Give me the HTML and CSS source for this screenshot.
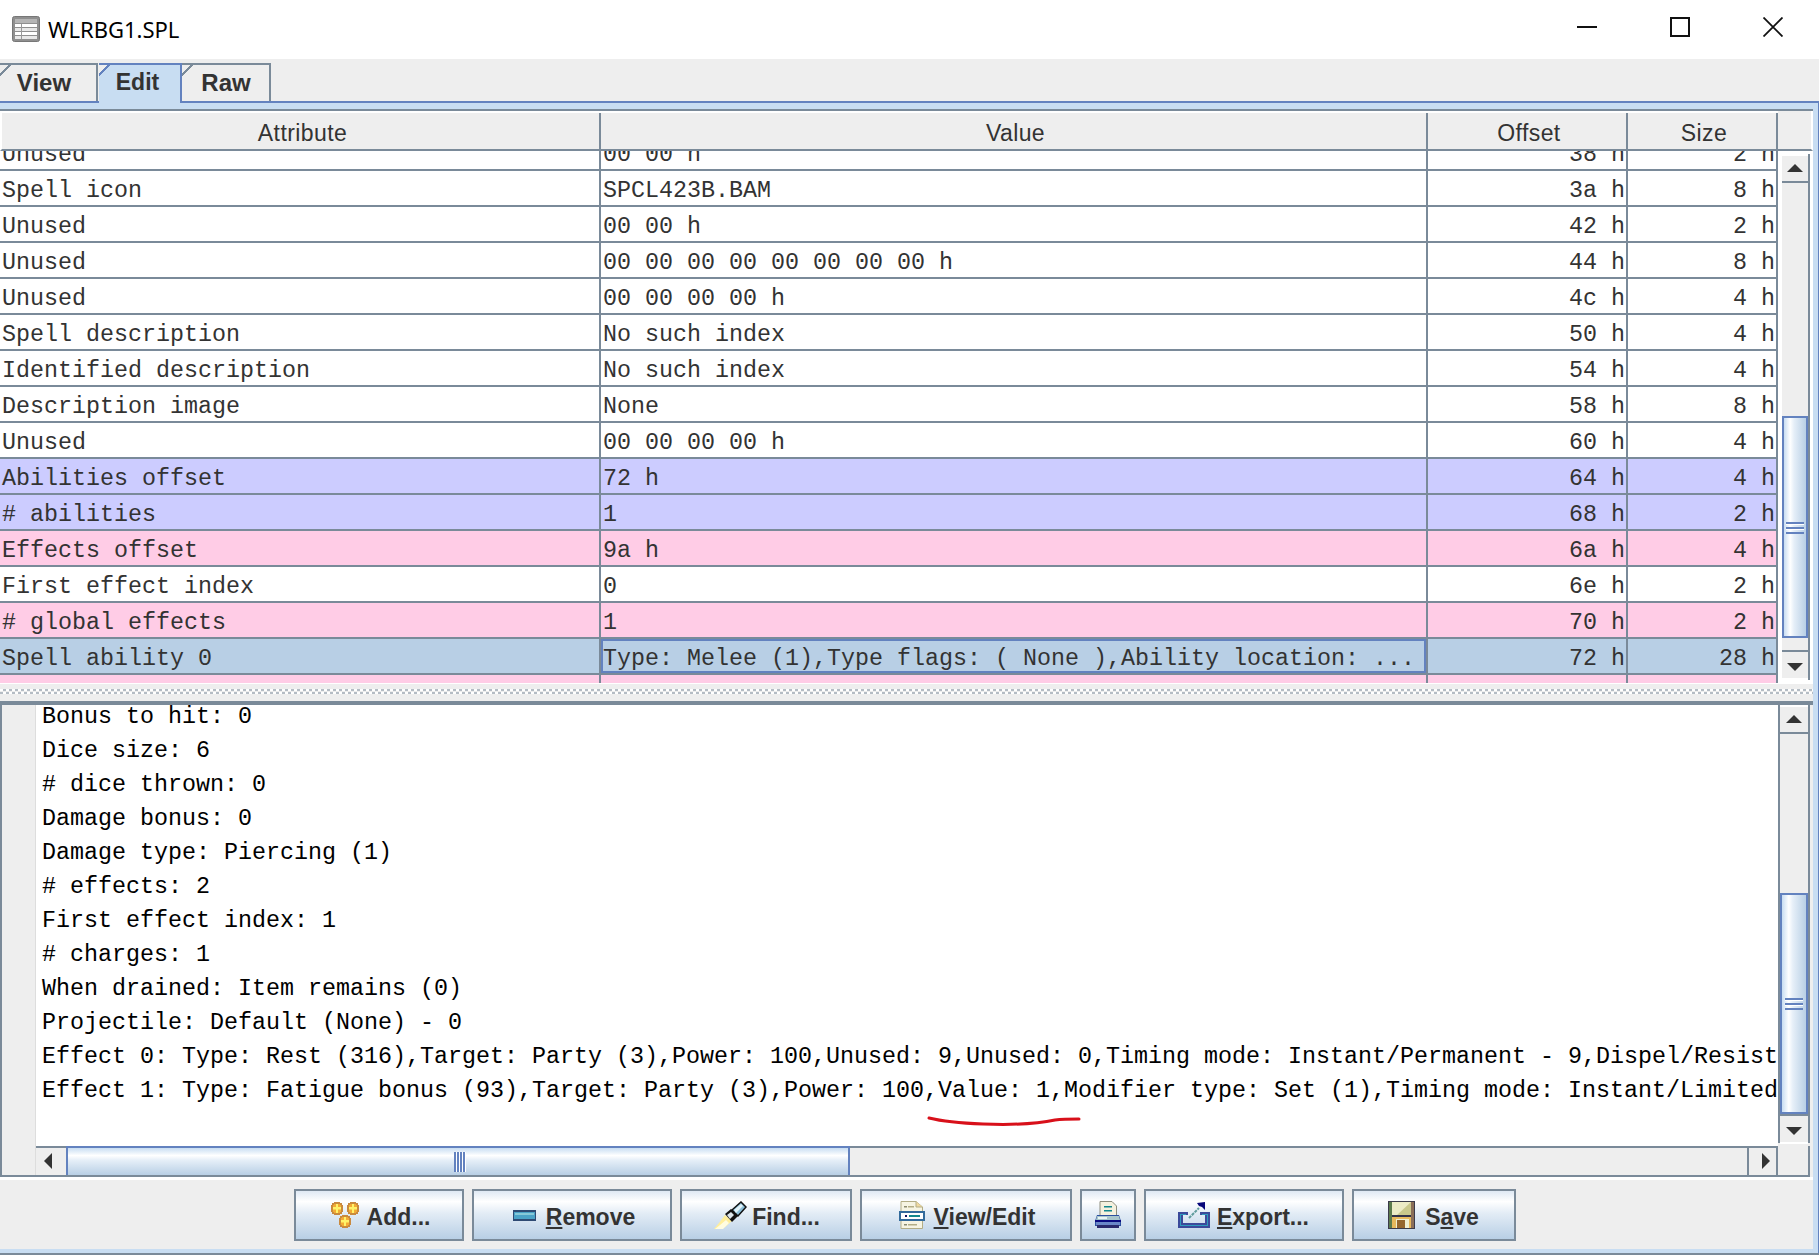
FILE: index.html
```html
<!DOCTYPE html>
<html lang="en">
<head>
  <meta charset="UTF-8">
  <title>WLRBG1.SPL</title>
  <link rel="stylesheet" href="styles.css">
</head>
<body>
<div class="window">

  <div class="titlebar">
    <svg class="app-icon" width="28" height="26" viewBox="0 0 28 26">
      <rect x="0.5" y="0.5" width="27" height="25" rx="2" fill="#8f8f8f" stroke="#777"/>
      <rect x="3" y="3" width="22" height="4" fill="#b5b5b5"/>
      <rect x="3" y="8" width="22" height="3" fill="#fff"/>
      <rect x="3" y="12" width="22" height="3" fill="#e8e8e8"/>
      <rect x="3" y="16" width="22" height="3" fill="#fff"/>
      <rect x="3" y="20" width="22" height="3" fill="#e8e8e8"/>
      <rect x="9" y="8" width="1" height="15" fill="#999"/>
    </svg>
    <span class="title-text">WLRBG1.SPL</span>
    <div class="win-controls">
      <svg class="win-btn" width="20" height="20" viewBox="0 0 20 20"><rect x="0" y="9" width="20" height="2" fill="#111"/></svg>
      <svg class="win-btn" width="20" height="20" viewBox="0 0 20 20"><rect x="1" y="1" width="18" height="18" fill="none" stroke="#111" stroke-width="2"/></svg>
      <svg class="win-btn" width="20" height="20" viewBox="0 0 20 20"><path d="M0.5 0.5L19.5 19.5M19.5 0.5L0.5 19.5" stroke="#111" stroke-width="1.8"/></svg>
    </div>
  </div>

  <div class="tabstrip">
    <div class="tab tab-view">View</div>
    <div class="tab tab-edit">Edit</div>
    <div class="tab tab-raw">Raw</div>
  </div>

  <div class="panel">
    <div class="panel-inner">

      <div class="table-pane">
        <div class="table-main">
          <div class="row header-row">
            <div class="cell">Attribute</div>
            <div class="cell">Value</div>
            <div class="cell">Offset</div>
            <div class="cell">Size</div>
          </div>
          <div class="table-viewport">
            <div class="rows">
              <div class="row"><div class="cell">Unused</div><div class="cell">00 00 h</div><div class="cell num">38 h</div><div class="cell num">2 h</div></div>
              <div class="row"><div class="cell">Spell icon</div><div class="cell">SPCL423B.BAM</div><div class="cell num">3a h</div><div class="cell num">8 h</div></div>
              <div class="row"><div class="cell">Unused</div><div class="cell">00 00 h</div><div class="cell num">42 h</div><div class="cell num">2 h</div></div>
              <div class="row"><div class="cell">Unused</div><div class="cell">00 00 00 00 00 00 00 00 h</div><div class="cell num">44 h</div><div class="cell num">8 h</div></div>
              <div class="row"><div class="cell">Unused</div><div class="cell">00 00 00 00 h</div><div class="cell num">4c h</div><div class="cell num">4 h</div></div>
              <div class="row"><div class="cell">Spell description</div><div class="cell">No such index</div><div class="cell num">50 h</div><div class="cell num">4 h</div></div>
              <div class="row"><div class="cell">Identified description</div><div class="cell">No such index</div><div class="cell num">54 h</div><div class="cell num">4 h</div></div>
              <div class="row"><div class="cell">Description image</div><div class="cell">None</div><div class="cell num">58 h</div><div class="cell num">8 h</div></div>
              <div class="row"><div class="cell">Unused</div><div class="cell">00 00 00 00 h</div><div class="cell num">60 h</div><div class="cell num">4 h</div></div>
              <div class="row row-ability"><div class="cell">Abilities offset</div><div class="cell">72 h</div><div class="cell num">64 h</div><div class="cell num">4 h</div></div>
              <div class="row row-ability"><div class="cell"># abilities</div><div class="cell">1</div><div class="cell num">68 h</div><div class="cell num">2 h</div></div>
              <div class="row row-effect"><div class="cell">Effects offset</div><div class="cell">9a h</div><div class="cell num">6a h</div><div class="cell num">4 h</div></div>
              <div class="row"><div class="cell">First effect index</div><div class="cell">0</div><div class="cell num">6e h</div><div class="cell num">2 h</div></div>
              <div class="row row-effect"><div class="cell"># global effects</div><div class="cell">1</div><div class="cell num">70 h</div><div class="cell num">2 h</div></div>
              <div class="row row-selected"><div class="cell">Spell ability 0</div><div class="cell cell-focus">Type: Melee (1),Type flags: ( None ),Ability location: ...</div><div class="cell num">72 h</div><div class="cell num">28 h</div></div>
              <div class="row row-effect"><div class="cell"></div><div class="cell"></div><div class="cell num"></div><div class="cell num"></div></div>
            </div>
          </div>
        </div>
        <div class="table-side">
          <div class="header-corner"></div>
          <div class="vscroll vscroll-table">
            <div class="sb-btn sb-up"></div>
            <div class="sb-track track-top-table"></div>
            <div class="sb-thumb thumb-table"><span class="grip"></span></div>
            <div class="sb-track track-bottom-table"></div>
            <div class="sb-btn sb-down"></div>
          </div>
        </div>
      </div>

      <div class="divider"></div>

      <div class="text-pane">
        <div class="gutter"></div>
        <div class="text-area">
          <div class="text-lines">
            <div class="line">Bonus to hit: 0</div>
            <div class="line">Dice size: 6</div>
            <div class="line"># dice thrown: 0</div>
            <div class="line">Damage bonus: 0</div>
            <div class="line">Damage type: Piercing (1)</div>
            <div class="line"># effects: 2</div>
            <div class="line">First effect index: 1</div>
            <div class="line"># charges: 1</div>
            <div class="line">When drained: Item remains (0)</div>
            <div class="line">Projectile: Default (None) - 0</div>
            <div class="line">Effect 0: Type: Rest (316),Target: Party (3),Power: 100,Unused: 9,Unused: 0,Timing mode: Instant/Permanent - 9,Dispel/Resist</div>
            <div class="line">Effect 1: Type: Fatigue bonus (93),Target: Party (3),Power: 100,Value: 1,Modifier type: Set (1),Timing mode: Instant/Limited</div>
          </div>
          <!-- red pen mark from the screenshot -->
          <svg class="pen-mark" width="154" height="12" viewBox="0 0 154 12">
            <path d="M2 2C14 5 30 7 56 8C84 9 110 8 128 4C136 3 144 3 152 3" fill="none" stroke="#d8101a" stroke-width="3" stroke-linecap="round"/>
          </svg>
        </div>
        <div class="vscroll vscroll-text">
          <div class="sb-btn sb-up"></div>
          <div class="sb-track track-top-text"></div>
          <div class="sb-thumb thumb-text"><span class="grip"></span></div>
          <div class="sb-btn sb-down"></div>
        </div>
        <div class="hscroll">
          <div class="sb-btn sb-left"></div>
          <div class="hthumb"><span class="hgrip"></span></div>
          <div class="htrack"></div>
          <div class="sb-btn sb-right"></div>
        </div>
        <div class="scroll-corner"></div>
      </div>

      <div class="button-bar">
        <button class="btn btn-add">
          <svg width="30" height="26" viewBox="0 0 30 26">
            <defs>
              <g id="plus-blob">
                <path d="M4 0h6v1h2v2h1v7h-1v2h-2v1H4v-1H2v-2H1V3h1V1h2z" fill="#c98a3e"/>
                <path d="M4 2h6v1h1v7h-1v1H4v-1H3V3h1z" fill="#f3ab35"/>
                <path d="M6 2h2v3h3v2.5H8V11H6V7.5H3V5h3z" fill="#fff36a"/>
              </g>
            </defs>
            <use href="#plus-blob" x="0" y="0"/>
            <use href="#plus-blob" x="16" y="0"/>
            <use href="#plus-blob" x="8" y="13"/>
          </svg>
          <span>Add...</span>
        </button>
        <button class="btn btn-remove">
          <svg width="23" height="11" viewBox="0 0 23 11">
            <rect width="23" height="11" fill="#2e4a73"/>
            <rect x="1" y="2" width="21" height="7" fill="#4ba3c7"/>
            <rect x="2" y="3" width="19" height="2" fill="#86c9d8"/>
          </svg>
          <span><u>R</u>emove</span>
        </button>
        <button class="btn btn-find">
          <svg width="33" height="28" viewBox="0 0 33 28">
            <path d="M0 28L5 22L11 14L18 20L11 26L6 28z" fill="#ffee9a"/>
            <path d="M1 28L6 24L12 19L15 22L9 28z" fill="#fffce0"/>
            <path d="M11 13L17 8L24 15L18 21z" fill="#111"/>
            <path d="M13 14L17 11L20 14L16 18z" fill="#dde6ec"/>
            <path d="M18 9L27 1L32 6L24 15z" fill="#8cc0da" stroke="#111" stroke-width="1.5"/>
            <path d="M20 9L27 3L29 5L22 12z" fill="#e3f3f9"/>
          </svg>
          <span>Find...</span>
        </button>
        <button class="btn btn-viewedit">
          <svg width="26" height="28" viewBox="0 0 26 28">
            <path d="M2 0.5H17L23.5 6V27.5H2z" fill="#f6f4e2" stroke="#b3ad85"/>
            <path d="M17 0.5V6H23.5" fill="#f0d9a0" stroke="#b3ad85"/>
            <rect x="5" y="5" width="3" height="1.5" fill="#8b8b70"/>
            <rect x="9" y="5" width="6" height="1.5" fill="#b3ad85"/>
            <rect x="5" y="23" width="3" height="1.5" fill="#8b8b70"/>
            <rect x="9" y="23" width="9" height="1.5" fill="#b3ad85"/>
            <rect x="1" y="11" width="24" height="8" fill="#fff" stroke="#336b9c" stroke-width="2"/>
            <rect x="6" y="14" width="2" height="2" fill="#12125e"/>
            <rect x="10" y="14" width="11" height="2" fill="#12888c"/>
          </svg>
          <span><u>V</u>iew/Edit</span>
        </button>
        <button class="btn btn-print">
          <svg width="28" height="28" viewBox="0 0 28 28">
            <path d="M6 0.5H18L22.5 5V15H6z" fill="#f4f1de" stroke="#8c8c7c"/>
            <rect x="10" y="5" width="8" height="1.5" fill="#12888c"/>
            <rect x="10" y="9" width="8" height="1.5" fill="#12888c"/>
            <path d="M3 14H25L27 20V25H1V20z" fill="#2b4fa0"/>
            <path d="M3 15H25L26 19H2z" fill="#a8c6cc"/>
            <rect x="4" y="16" width="9" height="2" fill="#e8f4f4"/>
            <rect x="1" y="19" width="26" height="2" fill="#0a0a80"/>
            <rect x="2" y="21" width="24" height="3" fill="#6a88c8"/>
            <rect x="3" y="24" width="22" height="3" fill="#2a2a6c"/>
          </svg>
        </button>
        <button class="btn btn-export">
          <svg width="32" height="26" viewBox="0 0 32 26">
            <path d="M0 10H10V13H5V21H27V13H22V10H32V26H0z" fill="#3b4a9a"/>
            <path d="M2 12H8V13H3V23H29V13H24V12H30V24H2z" fill="#2e9bbd"/>
            <path d="M11 16L21 6" stroke="#5f9c9c" stroke-width="2" stroke-dasharray="3 1"/>
            <path d="M19 1L27 0V8L24 5L21 4z" fill="#06067a"/>
          </svg>
          <span><u>E</u>xport...</span>
        </button>
        <button class="btn btn-save">
          <svg width="27" height="28" viewBox="0 0 27 28">
            <rect width="27" height="28" fill="#3b3b4a"/>
            <rect x="1" y="1" width="3" height="26" fill="#5c7a4c"/>
            <rect x="4" y="1" width="19" height="13" fill="#ecebc6"/>
            <path d="M23 1V14H9z" fill="#c9c88c"/>
            <rect x="23" y="1" width="3" height="26" fill="#8a6e58"/>
            <rect x="4" y="14" width="19" height="2" fill="#33334a"/>
            <rect x="4" y="16" width="19" height="11" fill="#e8b95c"/>
            <rect x="8" y="18" width="13" height="9" fill="#f0eed0"/>
            <rect x="9" y="19" width="8" height="8" fill="#96672e"/>
          </svg>
          <span>S<u>a</u>ve</span>
        </button>
      </div>

    </div>
  </div>
  <div class="bottom-edge"></div>

</div>
</body>
</html>
```

FILE: styles.css
```css
html, body {
  margin: 0;
  padding: 0;
  background-color: #ffffff;
  overflow: hidden;
}

.window {
  width: 1819px;
  height: 1257px;
  display: flex;
  flex-direction: column;
  font-family: "Liberation Sans", Arial, sans-serif;
  color: #333333;
}

/* title bar */

.titlebar {
  height: 59px;
  flex: none;
  display: flex;
  align-items: center;
  background-color: #ffffff;
  padding-left: 12px;
  box-sizing: border-box;
}

.app-icon {
  margin-top: -1px;
}

.title-text {
  margin-left: 8px;
  font-family: "Noto Sans", sans-serif;
  font-size: 22px;
  color: #000000;
  margin-top: -2px;
}

.win-controls {
  margin-left: auto;
  display: flex;
  gap: 73px;
  padding-right: 36px;
  margin-top: -6px;
}

/* tabs */

.tabstrip {
  height: 44px;
  flex: none;
  display: flex;
  align-items: flex-end;
  background-color: #eeeeee;
  border-bottom: 2px solid #6382bf;
  box-sizing: border-box;
  position: relative;
}

.tab {
  height: 38px;
  box-sizing: border-box;
  border-top: 2px solid #7a8a99;
  border-right: 2px solid #7a8a99;
  background-image: linear-gradient(135deg, #eeeeee 6px, #7a8a99 6px, #7a8a99 8px, #eeeeee 8px);
  font-weight: bold;
  font-size: 24px;
  line-height: 35px;
  text-align: center;
  color: #333333;
}

.tab-view {
  width: 98px;
  margin-right: 1px;
  padding-right: 8px;
}

.tab-edit {
  width: 83px;
  height: 40px;
  margin-bottom: -2px;
  border-color: #6382bf;
  background-image: linear-gradient(135deg, #eeeeee 6px, #6382bf 6px, #6382bf 8px, #c8ddf2 8px);
  padding-right: 4px;
  font-size: 23px;
  z-index: 1;
}

.tab-raw {
  width: 89px;
  padding-left: 1px;
}

/* tab body */

.panel {
  flex: 1;
  min-height: 0;
  background-color: #c8ddf2;
  padding: 6px 1px 4px 0;
  border-right: 1px solid #6382bf;
  box-sizing: border-box;
  display: flex;
  flex-direction: column;
}

.panel-inner {
  flex: 1;
  min-height: 0;
  margin-right: 4px;
  background-color: #eeeeee;
  display: flex;
  flex-direction: column;
}

.bottom-edge {
  height: 4px;
  flex: none;
  border-top: 2px solid #7a8a99;
  box-sizing: border-box;
  background-color: #ffffff;
}

/* attribute table */

.table-pane {
  height: 575px;
  flex: none;
  display: flex;
  border-top: 2px solid #7a8a99;
  box-sizing: border-box;
  border-bottom: 1px solid #ffffff;
  background-color: #ffffff;
}

.table-main {
  width: 1778px;
  flex: none;
  display: flex;
  flex-direction: column;
}

.row {
  display: grid;
  grid-template-columns: 601px 827px 200px 150px;
  height: 36px;
  box-sizing: border-box;
  border-bottom: 2px solid #7a8a99;
  background-color: #ffffff;
  font-family: "Liberation Mono", "Courier New", monospace;
  font-size: 23.33px;
  line-height: 40px;
  color: #333333;
}

.cell {
  border-right: 2px solid #7a8a99;
  padding-left: 2px;
  white-space: nowrap;
  overflow: hidden;
}

.cell.num {
  text-align: right;
  padding-right: 1px;
}

.header-row {
  height: 40px;
  flex: none;
  background-color: #eeeeee;
  font-family: "Liberation Sans", Arial, sans-serif;
  font-size: 23px;
  letter-spacing: 0.4px;
  line-height: 40px;
  border-top: 2px solid #ffffff;
  border-left: 2px solid #ffffff;
  grid-template-columns: 599px 827px 200px 150px;
}

.header-row .cell {
  text-align: center;
  padding-left: 4px;
}

.table-viewport {
  flex: 1;
  min-height: 0;
  overflow: hidden;
}

.rows {
  margin-top: -16px;
}

.row-ability {
  background-color: #ccccff;
}

.row-effect {
  background-color: #ffcce6;
}

.row-selected {
  background-color: #b8cfe5;
}

.cell-focus {
  box-shadow: inset 0 0 0 2px #6382bf;
}

.table-side {
  flex: 1;
  display: flex;
  flex-direction: column;
  background-color: #ffffff;
}

.header-corner {
  height: 40px;
  flex: none;
  background-color: #eeeeee;
  border-bottom: 2px solid #7a8a99;
  border-right: 2px solid #ffffff;
  box-sizing: border-box;
}

/* scrollbars */

.vscroll {
  display: flex;
  flex-direction: column;
  box-sizing: border-box;
}

.vscroll-table {
  flex: 1;
  min-height: 0;
  margin: 3px 3px 3px 4px;
  width: 28px;
  border-right: 2px solid #7a8a99;
}

.sb-btn {
  flex: none;
  background-color: #eeeeee;
  box-sizing: border-box;
  position: relative;
}

.sb-up {
  height: 29px;
  border-top: 2px solid #ffffff;
  border-bottom: 2px solid #7a8a99;
}

.sb-down {
  height: 30px;
  border-top: 2px solid #7a8a99;
  border-bottom: 2px solid #ffffff;
}

.sb-up::after,
.sb-down::after,
.sb-left::after,
.sb-right::after {
  content: "";
  position: absolute;
  width: 0;
  height: 0;
  border-style: solid;
  border-color: transparent;
}

.sb-up::after {
  left: 50%;
  top: 8px;
  margin-left: -8px;
  border-width: 0 8px 8px 8px;
  border-bottom-color: #333333;
}

.sb-down::after {
  left: 50%;
  top: 11px;
  margin-left: -8px;
  border-width: 8px 8px 0 8px;
  border-top-color: #333333;
}

.sb-track {
  background-color: #eeeeee;
}

.track-top-table {
  height: 233px;
  flex: none;
}

.track-bottom-table {
  flex: 1;
  min-height: 0;
}

.track-top-text {
  height: 159px;
  flex: none;
}

.sb-thumb {
  flex: none;
  box-sizing: border-box;
  border: 2px solid #6382bf;
  background-image: linear-gradient(90deg, #c8ddf2 0%, #ffffff 28%, #e6eff8 45%, #b8cfe5 100%);
  display: flex;
  align-items: flex-end;
  justify-content: center;
}

.thumb-table {
  height: 222px;
  padding-bottom: 102px;
}

.thumb-text {
  height: 221px;
  padding-bottom: 102px;
  flex: none;
}

.grip {
  display: block;
  width: 18px;
  height: 12px;
  background-image: repeating-linear-gradient(180deg, #6382bf 0, #6382bf 2px, #ffffff 2px, #ffffff 3px, transparent 3px, transparent 5px);
}

/* split bar */

.divider {
  height: 21px;
  flex: none;
  box-sizing: border-box;
  border-bottom: 4px solid #7a8a99;
  background-color: #eeeeee;
  background-image:
    linear-gradient(90deg, #ffffff 50%, #b4bcc4 50%),
    linear-gradient(90deg, #b4bcc4 50%, #ffffff 50%);
  background-size: 6px 2px, 6px 2px;
  background-position: 0 5px, 0 8px;
  background-repeat: repeat-x;
}

/* description pane */

.text-pane {
  height: 472px;
  flex: none;
  display: grid;
  grid-template-columns: 34px 1742px 32px;
  grid-template-rows: 441px 29px;
  border-left: 2px solid #7a8a99;
  border-bottom: 2px solid #7a8a99;
  box-sizing: border-box;
  width: 1810px;
}

.gutter {
  grid-row: 1 / span 2;
  background-color: #eeeeee;
  border-right: 1px solid #dddddd;
}

.text-area {
  background-color: #ffffff;
  overflow: hidden;
  position: relative;
}

.text-lines {
  margin-top: -5px;
  padding-left: 6px;
  font-family: "Liberation Mono", "Courier New", monospace;
  font-size: 23.33px;
  line-height: 34px;
  color: #000000;
  white-space: nowrap;
}

.pen-mark {
  position: absolute;
  left: 891px;
  top: 411px;
}

.vscroll-text {
  height: 438px;
  width: 32px;
  border-left: 2px solid #7a8a99;
  border-right: 2px solid #7a8a99;
}

.vscroll-text .sb-down {
  height: 30px;
  margin-top: auto;
}

.hscroll {
  grid-column: 2;
  display: flex;
  border-top: 2px solid #7a8a99;
  box-sizing: border-box;
}

.sb-left,
.sb-right {
  width: 30px;
  flex: none;
}

.sb-left::after {
  left: 8px;
  top: 5px;
  border-width: 8px 8px 8px 0;
  border-right-color: #333333;
}

.sb-right::after {
  left: 13px;
  top: 5px;
  border-width: 8px 0 8px 8px;
  border-left-color: #333333;
}

.sb-right {
  border-left: 2px solid #7a8a99;
  border-right: 2px solid #7a8a99;
  width: 31px;
}

.hthumb {
  width: 784px;
  flex: none;
  box-sizing: border-box;
  margin-top: -2px;
  border-top: 2px solid #6382bf;
  border-left: 2px solid #6382bf;
  border-right: 2px solid #6382bf;
  background-image: linear-gradient(180deg, #c8ddf2 0%, #ffffff 28%, #e6eff8 45%, #b8cfe5 100%);
  display: flex;
  justify-content: center;
  align-items: center;
}

.hgrip {
  display: block;
  width: 12px;
  height: 20px;
  margin-left: 3px;
  background-image: repeating-linear-gradient(90deg, #6382bf 0, #6382bf 2px, #ffffff 2px, #ffffff 3px);
}

.htrack {
  flex: 1;
  background-color: #eeeeee;
}

.scroll-corner {
  grid-column: 3;
  background-color: #eeeeee;
  border-right: 2px solid #7a8a99;
}

/* bottom buttons */

.button-bar {
  flex: 1;
  display: flex;
  justify-content: center;
  gap: 8px;
  padding: 9px 4px 0 0;
  border-top: 3px solid #ffffff;
  box-sizing: border-box;
  background-color: #eeeeee;
}

.btn {
  height: 52px;
  box-sizing: border-box;
  display: flex;
  align-items: center;
  justify-content: center;
  gap: 7px;
  padding: 0;
  border: 2px solid #7a8a99;
  background-image: linear-gradient(180deg, #dfe9f4 0%, #ffffff 22%, #e4edf6 45%, #b8cfe5 100%);
  font-family: "Liberation Sans", Arial, sans-serif;
  font-weight: bold;
  font-size: 23px;
  color: #333333;
}

.btn span {
  padding-top: 5px;
}

.btn-add {
  width: 170px;
  padding-left: 3px;
}

.btn-remove {
  width: 200px;
  gap: 10px;
  padding-left: 5px;
}

.btn-find {
  width: 172px;
  gap: 5px;
  padding-left: 3px;
}

.btn-viewedit {
  width: 212px;
  gap: 9px;
  padding-left: 3px;
}

.btn-print {
  width: 56px;
}

.btn-export {
  width: 200px;
}

.btn-save {
  width: 164px;
  gap: 10px;
}
```
